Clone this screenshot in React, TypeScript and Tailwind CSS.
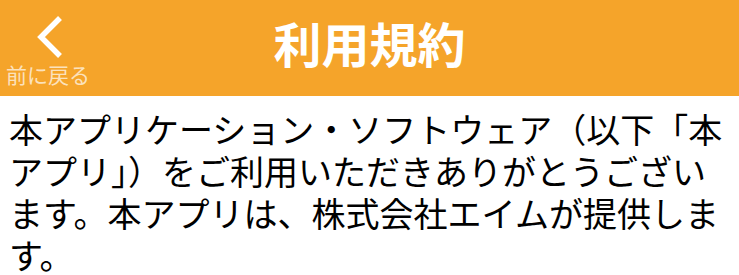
export default function App() {
  return (
    <div className="w-[739px] h-[275px] overflow-hidden bg-white" style={{ fontFamily: '"Noto Sans CJK JP", "Noto Sans", sans-serif' }}>
      {/* Header */}
      <div className="grid grid-cols-[96px_1fr_96px] items-center h-[96px] bg-[#F5A42A]">
        <button className="flex flex-col items-center pt-[15px] h-full">
          <svg width="30" height="44" viewBox="0 0 30 44" fill="none">
            <polyline points="27,3 8,22 27,41" stroke="white" strokeWidth="5.5" strokeLinecap="butt" strokeLinejoin="miter" />
          </svg>
          <span className="mt-[3px] text-[21px] leading-[24px] text-white/70">前に戻る</span>
        </button>
        <h1 className="text-center text-[48px] leading-none font-bold text-white pb-[12px]">利用規約</h1>
        <div />
      </div>

      {/* Body */}
      <div className="pl-[9px] pr-[4px] pt-[12px] text-[34px] leading-[42px] text-black">
        本アプリケーション・ソフトウェア（以下「本アプリ」）をご利用いただきありがとうございます。本アプリは、株式会社エイムが提供します。
      </div>
    </div>
  )
}
